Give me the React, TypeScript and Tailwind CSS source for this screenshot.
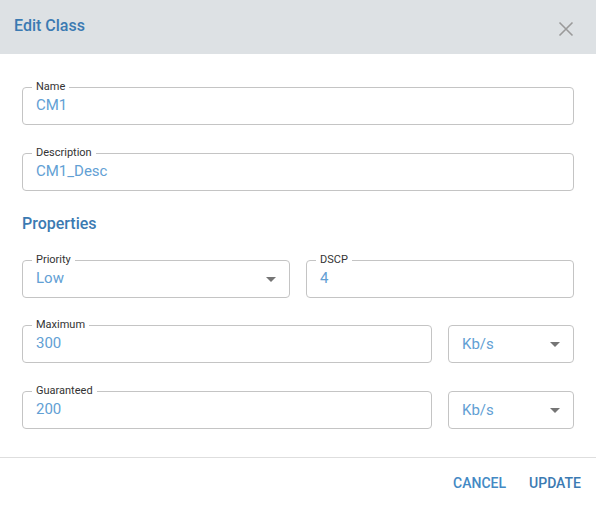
import React from "react";

function Field({ label, value, select, className = "" }: { label?: string; value: string; select?: boolean; className?: string }) {
  return (
    <div className={"relative h-[38px] rounded-[4px] border border-[#c4c4c4] flex items-center pl-[13px] pr-[13px] " + className}>
      {label && (
        <span className="absolute left-[9px] top-[-8px] bg-white px-[4px] text-[11px] leading-[14px] text-[#333]">{label}</span>
      )}
      <span className={"flex-1 text-[15px] leading-[18px] text-[#62a0d4] " + (label ? "mb-[3px]" : "")}>{value}</span>
      {select && (
        <svg width="10" height="5" viewBox="0 0 10 5" className="shrink-0 mt-[1px]">
          <path d="M0 0 L10 0 L5 5 Z" fill="#757575" />
        </svg>
      )}
    </div>
  );
}

export default function App() {
  return (
    <div className="w-[596px] h-[506px] bg-white font-['Roboto',sans-serif] flex flex-col">
      <div className="h-[54px] bg-[#dde1e4] flex items-center justify-between pl-[14px] pr-[22px] shrink-0">
        <span className="text-[16px] leading-[24px] font-medium text-[#3b7ab2] mb-[2px]">Edit Class</span>
        <svg width="16" height="16" viewBox="0 0 16 16" className="mt-[4px]">
          <path d="M1.5 1.5 L14.5 14.5 M14.5 1.5 L1.5 14.5" stroke="#9a9a9a" strokeWidth="1.6" />
        </svg>
      </div>
      <div className="px-[22px] pt-[33px] flex flex-col">
        <Field label="Name" value="CM1" />
        <Field label="Description" value="CM1_Desc" className="mt-[28px]" />
        <div className="mt-[21px] text-[16px] leading-[24px] font-medium text-[#3b7ab2]">Properties</div>
        <div className="mt-[24px] grid grid-cols-2 gap-[16px]">
          <Field label="Priority" value="Low" select />
          <Field label="DSCP" value="4" />
        </div>
        <div className="mt-[27px] flex gap-[16px]">
          <Field label="Maximum" value="300" className="flex-1" />
          <Field value="Kb/s" select className="w-[126px]" />
        </div>
        <div className="mt-[28px] flex gap-[16px]">
          <Field label="Guaranteed" value="200" className="flex-1" />
          <Field value="Kb/s" select className="w-[126px]" />
        </div>
      </div>
      <div className="mt-[28px] border-t border-[#dedede] flex justify-end items-center gap-[23px] pr-[15px] pt-[2px] h-[52px]">
        <span className="text-[14px] font-medium text-[#4389c4]">CANCEL</span>
        <span className="text-[14px] font-medium text-[#3b7ab2]">UPDATE</span>
      </div>
    </div>
  );
}
